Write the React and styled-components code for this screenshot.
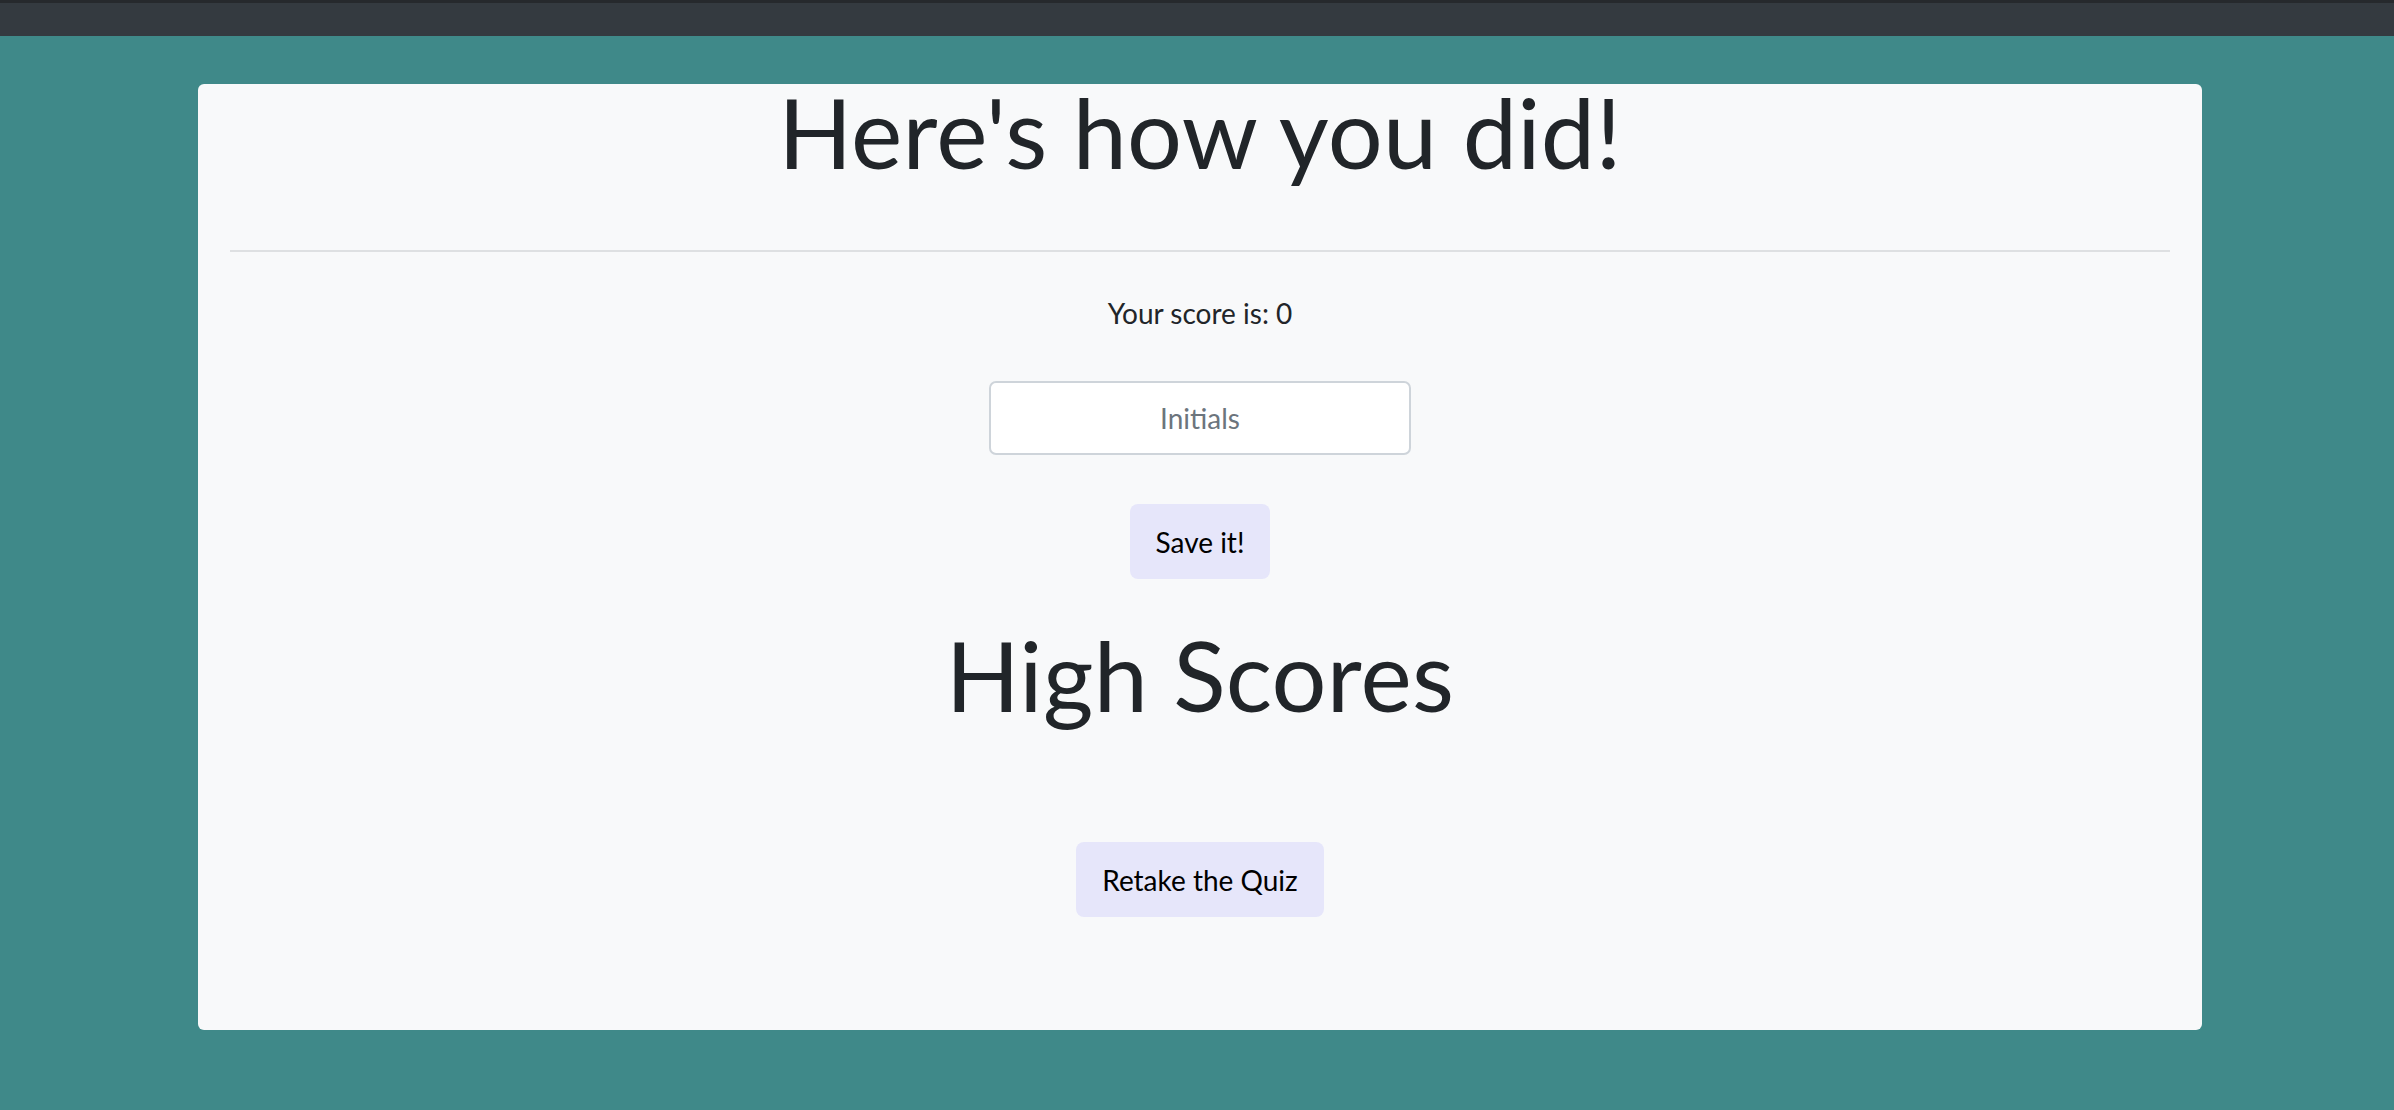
import React from 'react';
import styled, { createGlobalStyle } from 'styled-components';

const GlobalStyle = createGlobalStyle`
  * {
    box-sizing: border-box;
  }

  body {
    margin: 0;
    background: #3f8989;
    font-family: Lato, "Open Sans", sans-serif;
    color: #212529;
  }
`;

const Page = styled.div`
  min-height: 100vh;
`;

const TopBar = styled.div`
  height: 36px;
  background: #343a40;
  border-top: 3px solid #26292d;
`;

const Main = styled.main`
  padding: 48px 0 60px;
`;

const Card = styled.section`
  width: 2004px;
  margin: 0 0 0 198px;
  background: #f8f9fa;
  border-radius: 6px;
  padding: 0 32px 113px;
  display: flex;
  flex-direction: column;
  align-items: center;
`;

const Heading = styled.h1`
  margin: ${(p) => p.$spacing || '0'};
  font-size: 97px;
  font-weight: 400;
  line-height: 96px;
  letter-spacing: 0.3px;
  text-align: center;
`;

const Divider = styled.hr`
  align-self: stretch;
  margin: 70px 0 40px;
  border: 0;
  border-top: 2px solid #dee0e2;
`;

const Score = styled.p`
  margin: 0 0 47px;
  font-size: 28px;
  line-height: 42px;
`;

const InitialsInput = styled.input`
  width: 422px;
  height: 74px;
  border: 2px solid #ced4da;
  border-radius: 7px;
  background: #fff;
  font-family: inherit;
  font-size: 28px;
  color: #495057;
  text-align: center;
  outline: none;

  &::placeholder {
    color: #6c757d;
  }
`;

const ActionButton = styled.button`
  height: 75px;
  margin: ${(p) => p.$spacing || '0'};
  padding: 0 26px;
  border: none;
  border-radius: 8px;
  background: #e6e6fa;
  color: #000;
  font-family: inherit;
  font-size: 28px;
  cursor: pointer;
`;

const App = () => {
  return (
    <Page>
      <GlobalStyle />
      <TopBar />
      <Main>
        <Card>
          <Heading>Here's how you did!</Heading>
          <Divider />
          <Score>Your score is: 0</Score>
          <InitialsInput placeholder="Initials" />
          <ActionButton $spacing="49px 0 48px">Save it!</ActionButton>
          <Heading>High Scores</Heading>
          <ActionButton $spacing="119px 0 0">Retake the Quiz</ActionButton>
        </Card>
      </Main>
    </Page>
  );
};

export default App;
